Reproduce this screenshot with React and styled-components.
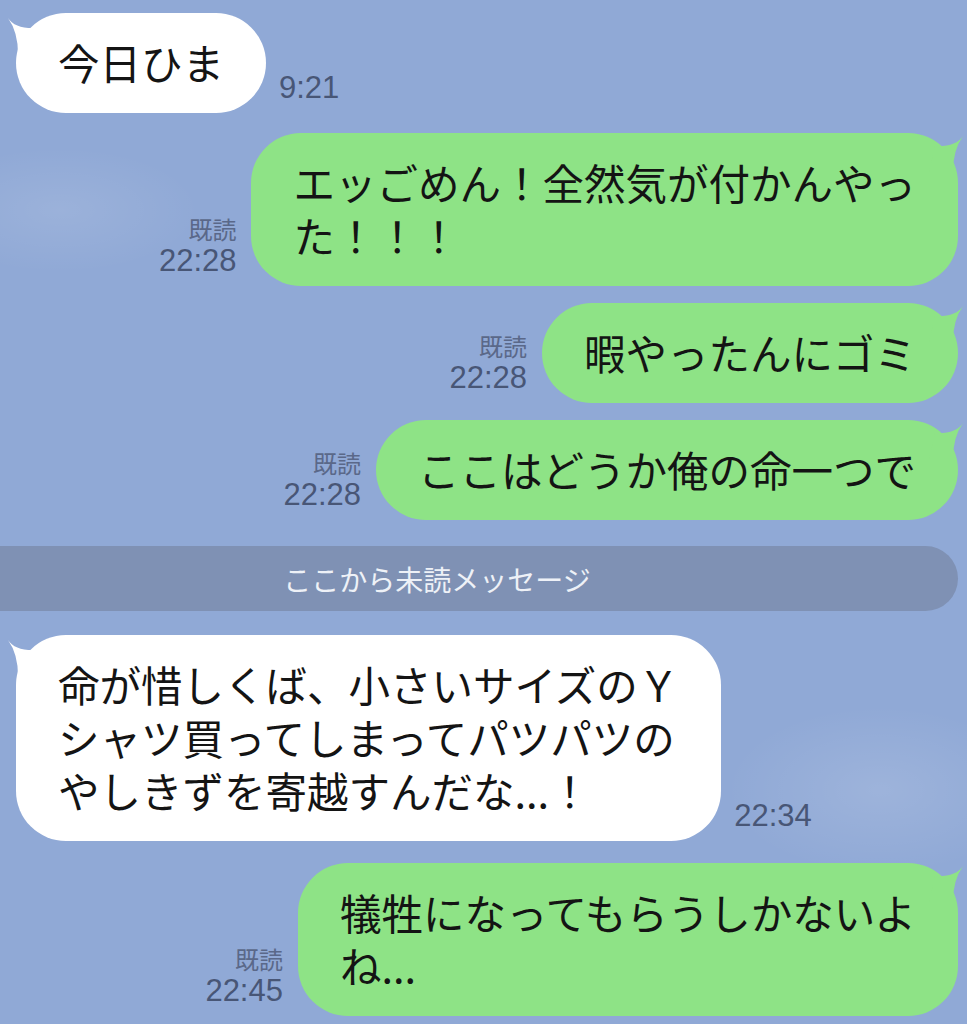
import React from "react";
import styled, { createGlobalStyle } from "styled-components";

const GlobalStyle = createGlobalStyle`
  html, body {
    margin: 0;
    padding: 0;
    overflow: hidden;
  }
  body {
    background-color: #90a9d6;
    background-image:
      radial-gradient(ellipse 220px 120px at 880px 790px, rgba(255, 255, 255, 0.12), transparent 70%),
      radial-gradient(ellipse 200px 90px at 60px 210px, rgba(255, 255, 255, 0.1), transparent 70%);
    font-family: "Noto Sans CJK JP", "Noto Sans", sans-serif;
    min-height: 1024px;
  }
`;

const Chat = styled.div`
  display: flex;
  flex-direction: column;
  padding: 13px 9px 0 16px;
`;

const Row = styled.div`
  display: flex;
  align-items: flex-end;
  justify-content: ${({ $mine }) => ($mine ? "flex-end" : "flex-start")};
  gap: ${({ $mine }) => ($mine ? "15px" : "13px")};
  margin-top: ${({ $top }) => $top || 0}px;
`;

const Bubble = styled.div`
  position: relative;
  background: ${({ $mine }) => ($mine ? "#8ee386" : "#ffffff")};
  color: #141414;
  font-size: 41.5px;
  line-height: 53px;
  padding: 23px 42px 24px 42px;
  border-radius: 50px;
  white-space: nowrap;
`;

const Tail = styled.svg`
  position: absolute;
  top: ${({ $mine }) => ($mine ? "3px" : "5px")};
  ${({ $mine }) => ($mine ? "right: -5px;" : "left: -8px;")}
  width: 34px;
  height: 36px;
  fill: ${({ $mine }) => ($mine ? "#8ee386" : "#ffffff")};
`;

const Meta = styled.div`
  display: flex;
  flex-direction: column;
  align-items: ${({ $mine }) => ($mine ? "flex-end" : "flex-start")};
  padding-bottom: 8px;
  color: #485676;
`;

const Read = styled.span`
  font-size: 24px;
  line-height: 29px;
  color: #5a6889;
`;

const Time = styled.span`
  font-family: "Liberation Sans", "Noto Sans", sans-serif;
  font-size: 31px;
  line-height: 35px;
`;

const Divider = styled.div`
  margin: 26px 0 0 -100px;
  height: 65px;
  border-radius: 0 33px 33px 0;
  background: #7f91b4;
  color: #eef1f7;
  font-size: 28px;
  display: flex;
  align-items: center;
  justify-content: center;
`;

const TailShape = ({ mine }) => (
  <Tail $mine={mine} viewBox="0 0 34 36" aria-hidden="true">
    {mine ? (
      <path d="M34 0 Q 27 11 6 10 L 0 36 L 24 36 Q 24 14 34 0 Z" />
    ) : (
      <path d="M0 0 Q 7 11 28 10 L 34 36 L 10 36 Q 10 14 0 0 Z" />
    )}
  </Tail>
);

const Message = ({ mine, top, time, read, children }) => (
  <Row $mine={mine} $top={top}>
    {mine && (
      <Meta $mine>
        {read && <Read>既読</Read>}
        <Time>{time}</Time>
      </Meta>
    )}
    <Bubble $mine={mine}>
      <TailShape mine={mine} />
      {children}
    </Bubble>
    {!mine && (
      <Meta>
        <Time>{time}</Time>
      </Meta>
    )}
  </Row>
);

const App = () => {
  return (
    <>
      <GlobalStyle />
      <Chat>
        <Message time="9:21">今日ひま</Message>
        <Message mine read time="22:28" top={20}>
          エッごめん！全然気が付かんやっ
          <br />
          た！！！
        </Message>
        <Message mine read time="22:28" top={17}>
          暇やったんにゴミ
        </Message>
        <Message mine read time="22:28" top={17}>
          ここはどうか俺の命一つで
        </Message>
        <Divider>ここから未読メッセージ</Divider>
        <Message time="22:34" top={24}>
          命が惜しくば、小さいサイズのＹ
          <br />
          シャツ買ってしまってパツパツの
          <br />
          やしきずを寄越すんだな...！
        </Message>
        <Message mine read time="22:45" top={22}>
          犠牲になってもらうしかないよ
          <br />
          ね...
        </Message>
      </Chat>
    </>
  );
};

export default App;
